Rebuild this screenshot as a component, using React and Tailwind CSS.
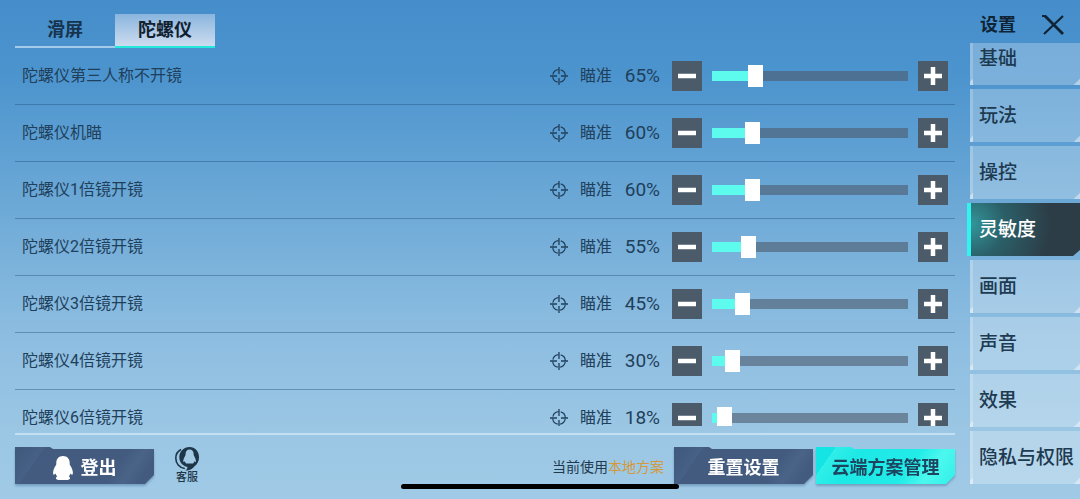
import React, { useState } from "react";

const TABS = ["滑屏", "陀螺仪"];

const ROWS = [
  { label: "陀螺仪第三人称不开镜", value: 65 },
  { label: "陀螺仪机瞄", value: 60 },
  { label: "陀螺仪1倍镜开镜", value: 60 },
  { label: "陀螺仪2倍镜开镜", value: 55 },
  { label: "陀螺仪3倍镜开镜", value: 45 },
  { label: "陀螺仪4倍镜开镜", value: 30 },
  { label: "陀螺仪6倍镜开镜", value: 18 },
];

const SECTIONS = ["基础", "玩法", "操控", "灵敏度", "画面", "声音", "效果", "隐私与权限"];

const MIN = 10;
const MAX = 288;

function CrosshairIcon() {
  return (
    <svg className="w-5 h-5 shrink-0" viewBox="0 0 20 20" fill="none" stroke="currentColor" aria-hidden="true">
      <circle cx="10" cy="10" r="6.3" strokeWidth="1.2" strokeDasharray="7.9 2" strokeDashoffset="-1" />
      <path d="M10 1v7M10 12v7M1 10h7M12 10h7" strokeWidth="1.3" />
    </svg>
  );
}

function PenguinIcon() {
  return (
    <svg className="w-5 h-6 shrink-0" viewBox="0 0 20 24" fill="currentColor" aria-hidden="true">
      <path d="M10 0C5.800 0 3.300 2.900 3.300 6.800c0 .9 0 1.700-.2 2.300C1.400 11.500.1 14.300.1 16.800c0 1.300.4 2 .9 1.900.6-.1 1.100-.6 1.600-1.200.4 1.300.9 2.200 1.700 3-1 .4-1.400 1-1.400 1.700C2.900 23.400 4.600 24 6.600 24h6.800c2 0 3.700-.6 3.700-1.800 0-.7-.4-1.300-1.400-1.700.8-.8 1.300-1.700 1.700-3 .5.6 1 1.100 1.600 1.200.5.1.9-.6.9-1.900 0-2.500-1.300-5.300-3-7.700-.2-.6-.2-1.400-.2-2.300C16.700 2.900 14.200 0 10 0Z" />
    </svg>
  );
}

function ServiceIcon() {
  return (
    <svg className="w-6 h-6" viewBox="0 0 24 24" aria-hidden="true">
      <path d="M6 2.500C2.600 4.200.8 7.300.8 11.300c0 5 3.400 9.300 9 10.200" fill="none" stroke="currentColor" strokeWidth="1.600" />
      <path d="M14.500 0C8.800 0 4.300 4.500 4.300 10.200c0 5 3.400 8.800 8.200 9.800-.1 1.500-.8 2.700-2.200 3.700 4.200-.1 7.300-1.700 9.500-4.700 2.600-1.900 4.200-5.200 4.200-8.800C24 4.500 20.200 0 14.500 0Z" fill="currentColor" />
      <path d="M14.600 2.500c-2.500 0-4 1.900-4 4.200 0 .9-.1 1.500-.5 2.300-1 1.800-1.900 3.600-1.800 5.500.1.900.9.500 1.500-.3.300 1 .7 1.700 1.300 2.300h7c.6-.6 1-1.300 1.300-2.300.6.800 1.400 1.200 1.500.3.100-1.900-.8-3.700-1.800-5.500-.4-.8-.5-1.400-.5-2.300 0-2.300-1.500-4.200-4-4.200Z" fill="#a3cbe6" />
    </svg>
  );
}

function StepButton({ plus, label, onClick }) {
  return (
    <button
      type="button"
      aria-label={label}
      onClick={onClick}
      className="w-[30px] h-[30px] shrink-0 flex items-center justify-center bg-[#4b5b69] text-white"
    >
      <svg className="w-5 h-5" viewBox="0 0 20 20" stroke="currentColor" strokeWidth="4.500" aria-hidden="true">
        <path d={plus ? "M1 10h18M10 1v18" : "M1 10h18"} />
      </svg>
    </button>
  );
}

function SensitivityRow({ label, initial }) {
  const [value, setValue] = useState(initial);
  const ratio = (value - MIN) / (MAX - MIN);
  const fill = `calc(7px + (100% - 15px) * ${ratio})`;

  return (
    <li className="h-[57px] shrink-0 flex items-center px-[7px] border-b border-[#1d4a78]/40 text-[#1f3f5b]">
      <span className="flex-1 text-base">{label}</span>
      <CrosshairIcon />
      <span className="ml-[11px] text-base">瞄准</span>
      <span className="w-12 text-right text-[19px] leading-4">{value}%</span>
      <div className="ml-3 flex items-center gap-[10px]">
        <StepButton label={`${label} 减少`} onClick={() => setValue(Math.max(MIN, value - 1))} />
        <input
          type="range"
          min={MIN}
          max={MAX}
          value={value}
          aria-label={label}
          onChange={(e) => setValue(Number(e.target.value))}
          className="w-[196px] h-[22px] appearance-none bg-transparent bg-[length:100%_10px] bg-center bg-no-repeat [&::-webkit-slider-thumb]:appearance-none [&::-webkit-slider-thumb]:w-[15px] [&::-webkit-slider-thumb]:h-[22px] [&::-webkit-slider-thumb]:bg-white"
          style={{ backgroundImage: `linear-gradient(to right, #5cfbee ${fill}, #4c5a6c99 ${fill})` }}
        />
        <StepButton plus label={`${label} 增加`} onClick={() => setValue(Math.min(MAX, value + 1))} />
      </div>
    </li>
  );
}

function ActionButton({ bright, children }) {
  const tone = bright
    ? "bg-[linear-gradient(125deg,#14e4e4_0%,#14e4e4_12%,#30eee8_12%,#1ce8e6_30%,#22ece8_65%,#4cf8ee_80%,#30f0ea_100%)] text-[#1d4560]"
    : "bg-[linear-gradient(125deg,#3f597c_0%,#466086_18%,#425b7e_18%,#425b7e_70%,#4a6487_80%,#425b7e_90%)] text-white";
  return (
    <div className="drop-shadow-[0_2px_1px_rgba(40,80,120,0.35)]">
      <button
        type="button"
        className={`w-[139px] h-[37px] flex items-center justify-center gap-2 pt-1 text-lg font-bold [clip-path:polygon(0_0,35px_0,38px_2px,100%_2px,100%_28px,calc(100%-9px)_100%,0_100%)] ${tone}`}
      >
        {children}
      </button>
    </div>
  );
}

function SideNav() {
  const [active, setActive] = useState("灵敏度");
  return (
    <aside className="w-[113px] shrink-0 flex flex-col pb-[15px]">
      <div className="h-[43px] shrink-0 flex items-center justify-between pl-[13px] pr-4 pt-[6px] text-[#0f2436]">
        <h1 className="text-lg font-bold">设置</h1>
        <button type="button" aria-label="关闭">
          <svg className="w-[22px] h-5" viewBox="0 0 22 20" fill="none" stroke="currentColor" aria-hidden="true">
            <path d="M3 1 21 19" strokeWidth="2.800" />
            <path d="M0 1h4M21 1 2 19" strokeWidth="2.200" />
          </svg>
        </button>
      </div>
      <nav className="flex-1 min-h-0 overflow-hidden flex flex-col justify-end gap-1">
        {SECTIONS.map((name) => (
          <button
            key={name}
            type="button"
            onClick={() => setActive(name)}
            className={`h-[53px] shrink-0 pt-0.5 text-left text-[19px] font-medium whitespace-nowrap ${
              name === active
                ? "pl-2 border-l-4 border-[#30f4f0] text-white bg-[radial-gradient(circle_at_0%_40%,#33969a_0%,#2b5f68_30%,#2c3d47_70%)] [clip-path:polygon(0_0,100%_0,100%_47px,calc(100%-7px)_100%,0_100%)]"
                : "ml-[3px] pl-[6px] border-l-[3px] border-white/20 text-[#1d3a50] bg-[linear-gradient(315deg,#ffffff90_4px,#ffffff42_5px)]"
            }`}
          >
            {name}
          </button>
        ))}
      </nav>
    </aside>
  );
}

export default function App() {
  const [tab, setTab] = useState("陀螺仪");

  return (
    <div className="relative h-screen flex gap-3 pl-[15px] overflow-hidden bg-[linear-gradient(to_bottom,#468ecb_0%,#4c94ce_15%,#6ba8d6_40%,#8bbce0_65%,#9ac6e4_85%,#a0cae6_100%)] font-['Roboto','Noto_Sans_CJK_SC',sans-serif]">
      <main className="flex-1 min-w-0 flex flex-col pt-[14px] pb-[15px]">
        <div role="tablist" className="flex shrink-0">
          {TABS.map((name) => (
            <button
              key={name}
              type="button"
              role="tab"
              aria-selected={tab === name}
              onClick={() => setTab(name)}
              className={`w-[100px] h-[34px] border-b-2 text-lg font-bold leading-none ${
                tab === name
                  ? "border-[#25e8dc] text-[#10202e] bg-linear-to-b from-[#8ab5de] to-[#cddcef]"
                  : "border-[#a5cbea] text-[#16344e]"
              }`}
            >
              {name}
            </button>
          ))}
        </div>

        <ul className="flex-1 min-h-0 overflow-y-auto [scrollbar-width:none]">
          {ROWS.map((row) => (
            <SensitivityRow key={row.label} label={row.label} initial={row.value} />
          ))}
        </ul>

        <footer className="shrink-0 mt-[7px] pt-3 border-t-2 border-[#c3e0f2] flex items-center">
          <ActionButton>
            <PenguinIcon />
            登出
          </ActionButton>
          <button type="button" className="ml-[21px] flex flex-col items-center gap-px text-[11px] leading-3 font-medium text-[#1d3648]">
            <ServiceIcon />
            客服
          </button>
          <p className="ml-auto mr-[10px] pt-0.5 text-sm text-[#1f3a50]">
            当前使用<span className="text-[#d3993c]">本地方案</span>
          </p>
          <div className="flex gap-[3px]">
            <ActionButton>重置设置</ActionButton>
            <ActionButton bright>云端方案管理</ActionButton>
          </div>
        </footer>
      </main>

      <SideNav />

      {/* home indicator */}
      <div className="absolute bottom-[10px] left-1/2 -translate-x-1/2 w-[278px] h-[5px] rounded-full bg-black" />
    </div>
  );
}
